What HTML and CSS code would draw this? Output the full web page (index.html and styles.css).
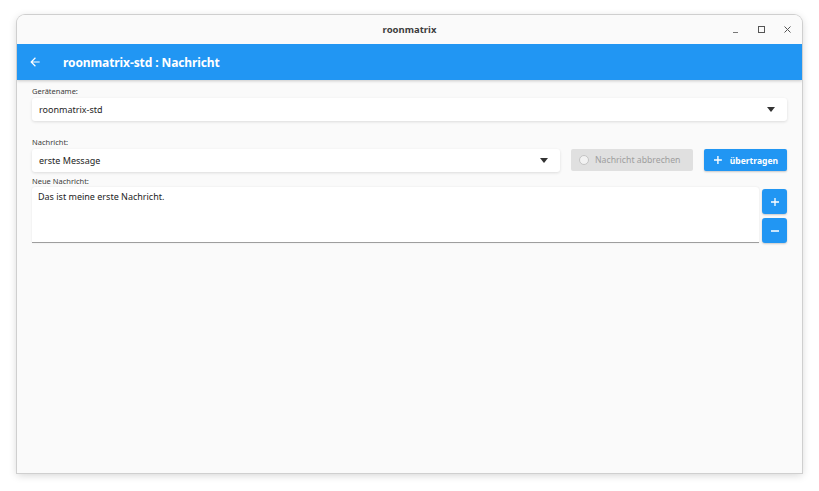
FILE: index.html
```html
<!DOCTYPE html>
<html lang="de">
<head>
    <meta charset="UTF-8">
    <title>roonmatrix</title>
    <link rel="stylesheet" href="styles.css">
</head>
<body>
    <div class="window">
        <div class="titlebar">
            <span class="title">roonmatrix</span>
            <div class="win-controls">
                <span class="win-btn min"></span>
                <span class="win-btn max"></span>
                <svg class="win-close" width="7" height="7" viewBox="0 0 7 7">
                    <path d="M0.5 0.5l6 6M6.5 0.5l-6 6" stroke="#555" stroke-width="1"/>
                </svg>
            </div>
        </div>
        <div class="appbar">
            <svg class="back" width="14" height="14" viewBox="0 0 24 24">
                <path d="M20 11H7.83l5.59-5.59L12 4l-8 8 8 8 1.41-1.41L7.83 13H20v-2z" fill="#fff"/>
            </svg>
            <span class="appbar-title">roonmatrix-std : Nachricht</span>
        </div>
        <div class="content">
            <div class="field">
                <label class="label">Gerätename:</label>
                <div class="select">
                    <span>roonmatrix-std</span>
                    <span class="caret"></span>
                </div>
            </div>

            <div class="field second">
                <label class="label">Nachricht:</label>
                <div class="row">
                    <div class="select grow">
                        <span>erste Message</span>
                        <span class="caret"></span>
                    </div>
                    <button class="btn disabled">
                        <span class="radio"></span>
                        Nachricht abbrechen
                    </button>
                    <button class="btn primary">
                        <svg width="10" height="10" viewBox="0 0 10 10">
                            <path d="M5 1v8M1 5h8" stroke="#fff" stroke-width="1.4"/>
                        </svg>
                        übertragen
                    </button>
                </div>
            </div>

            <div class="field third">
                <label class="label">Neue Nachricht:</label>
                <div class="row top">
                    <div class="textarea">Das ist meine erste Nachricht.</div>
                    <div class="side-buttons">
                        <button class="icon-btn">
                            <svg width="10" height="10" viewBox="0 0 10 10">
                                <path d="M5 1v8M1 5h8" stroke="#fff" stroke-width="1.3"/>
                            </svg>
                        </button>
                        <button class="icon-btn">
                            <svg width="10" height="10" viewBox="0 0 10 10">
                                <path d="M1 5h8" stroke="#fff" stroke-width="1.3"/>
                            </svg>
                        </button>
                    </div>
                </div>
            </div>
        </div>
    </div>
</body>
</html>
```

FILE: styles.css
```css
body {
    margin: 0;
    width: 819px;
    height: 491px;
    background-color: #ffffff;
    font-family: 'Noto Sans', 'Open Sans', sans-serif;
    overflow: hidden;
}

.window {
    margin: 15px 0 0 17px;
    width: 785px;
    height: 458px;
    background-color: #fafafa;
    border-radius: 8px 8px 0 0;
    box-shadow: 0 0 0 1px #cfcfcf, 0 2px 8px rgba(0, 0, 0, 0.18);
    display: flex;
    flex-direction: column;
    overflow: hidden;
}

.titlebar {
    height: 29px;
    display: flex;
    align-items: center;
    justify-content: center;
    position: relative;
    background-color: #fafafa;
}

.title {
    font-size: 9.5px;
    font-weight: bold;
    color: #3d3d3d;
}

.win-controls {
    position: absolute;
    right: 11px;
    top: 0;
    height: 29px;
    display: flex;
    align-items: center;
}

.win-btn.min {
    width: 5px;
    height: 1px;
    background-color: #777;
    margin-top: 5px;
}

.win-btn.max {
    width: 5px;
    height: 5px;
    border: 1px solid #555;
    margin: 0 19px 0 20px;
}

.appbar {
    height: 36px;
    background-color: #2196f3;
    display: flex;
    align-items: center;
    box-shadow: 0 1px 3px rgba(0, 0, 0, 0.2);
}

.back {
    margin-left: 11px;
}

.appbar-title {
    margin-left: 21px;
    color: #fff;
    font-size: 12px;
    font-weight: bold;
    letter-spacing: -0.1px;
}

.content {
    padding: 5px 15px 0 15px;
}

.label {
    display: block;
    font-size: 7.5px;
    color: #3a3a3a;
    height: 12px;
    line-height: 12px;
}

.field.second {
    margin-top: 15px;
}

.field.third {
    margin-top: 3px;
}

.select {
    height: 23px;
    background-color: #fff;
    border-radius: 3px;
    box-shadow: 0 1px 3px rgba(0, 0, 0, 0.12);
    display: flex;
    align-items: center;
    justify-content: space-between;
    padding: 0 12px 0 7px;
    font-size: 9px;
    color: #1e1e1e;
    margin-top: 1px;
}

.caret {
    width: 0;
    height: 0;
    border-left: 4.5px solid transparent;
    border-right: 4.5px solid transparent;
    border-top: 5px solid #333;
}

.row {
    display: flex;
    align-items: center;
}

.row.top {
    align-items: flex-start;
}

.grow {
    flex: 1;
}

.btn {
    height: 22px;
    border: none;
    border-radius: 2px;
    font-family: inherit;
    font-size: 8.5px;
    white-space: nowrap;
    display: flex;
    align-items: center;
    padding: 0 9px;
    margin-left: 11px;
    box-sizing: border-box;
}

.btn.disabled {
    background-color: #e0e0e0;
    color: #9e9e9e;
    padding: 0 0 0 8px;
    width: 122px;
    font-size: 8.7px;
}

.radio {
    width: 8px;
    height: 8px;
    border: 1.5px solid #c4c4c4;
    border-radius: 50%;
    background-color: #f2f2f2;
    margin-right: 6px;
}

.btn.primary {
    background-color: #2196f3;
    color: #fff;
    font-weight: bold;
    width: 83px;
    padding-left: 9px;
    box-shadow: 0 1px 2px rgba(0, 0, 0, 0.2);
}

.btn.primary svg {
    margin-right: 7px;
}

.textarea {
    flex: 1;
    background-color: #fff;
    border-bottom: 1px solid #9e9e9e;
    border-radius: 3px 3px 0 0;
    box-shadow: 0 0 2px rgba(0, 0, 0, 0.1);
    padding: 3px 6px;
    box-sizing: border-box;
    font-size: 9px;
    color: #1e1e1e;
    height: 56px;
}

.side-buttons {
    display: flex;
    flex-direction: column;
    gap: 4px;
    margin-left: 3px;
    margin-top: 2px;
}

.icon-btn {
    width: 25px;
    height: 25px;
    background-color: #2196f3;
    border: none;
    border-radius: 3px;
    display: flex;
    align-items: center;
    justify-content: center;
    padding: 0;
    box-shadow: 0 1px 2px rgba(0, 0, 0, 0.2);
}
```
